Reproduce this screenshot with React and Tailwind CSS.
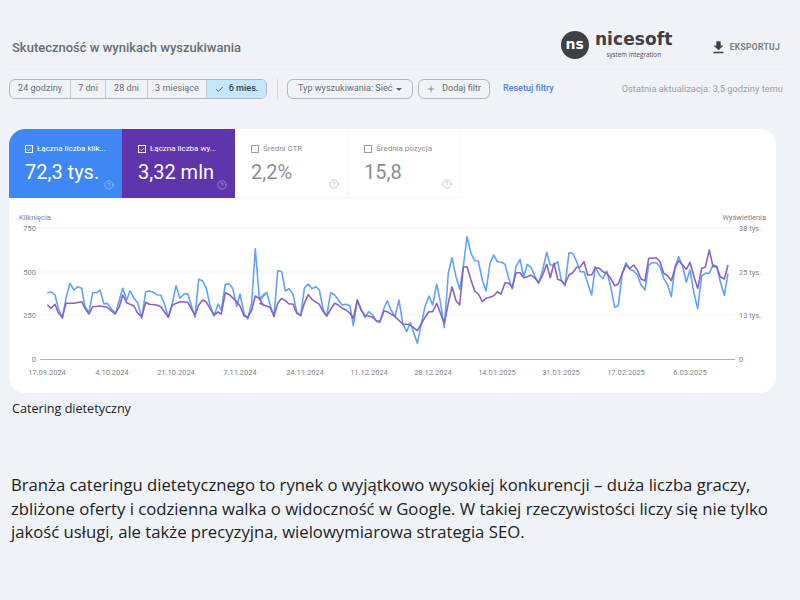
import React from 'react';
import { Check, Plus, CircleHelp } from 'lucide-react';

// points read off the reference chart, [x, y] in zoomed crop coords
const toPath = (groups) =>
  groups
    .flatMap(([base, pts]) => pts.map(([x, y]) => [base + x / 3, 210 + y / 3]))
    .map(([x, y], i) => `${i ? 'L' : 'M'}${x.toFixed(1)} ${y.toFixed(1)}`)
    .join(' ');

const blue = toPath([
  [0, [[142,248],[155,246],[165,255],[175,295],[187,325],[198,265],[210,220],[222,240],[233,230],[245,235],[255,290],[267,308],[278,248],[290,248],[300,240],[312,282],[322,280],[335,298],[347,310],[358,270],[368,235],[380,270],[390,242],[402,265],[413,278],[425,325],[437,245],[448,243],[460,247],[470,254],[482,255],[493,280],[505,322],[517,280],[528,227],[540,265],[552,252],[563,251],[575,290],[585,322],[596,208],[608,213],[618,232],[630,285],[642,318],[654,282],[664,300],[676,223],[688,222],[698,235],[710,290],[720,252],[732,310],[743,327],[755,280],[766,116],[778,265],[790,255],[800,248]]],
  [260, [[0,270],[10,255],[20,247],[32,290],[42,320],[53,182],[65,185],[76,243],[87,236],[99,252],[110,305],[122,318],[133,235],[145,222],[156,236],[168,230],[178,240],[190,300],[200,318],[212,248],[224,255],[235,270],[247,285],[258,283],[270,288],[280,347],[292,272],[315,322],[326,305],[338,315],[350,335],[360,337],[372,295],[382,272],[393,300],[405,320],[417,270],[428,340],[440,365],[451,338],[472,400],[495,290],[507,258],[518,285],[530,222],[541,275],[553,353],[565,190],[576,143],[588,200],[599,238],[610,170],[621,80],[633,130],[644,152],[655,153],[667,210],[678,243],[690,160],[701,135],[712,155],[723,156],[735,163],[746,205],[757,237],[768,170]]],
  [520, [[0,148],[11,200],[22,163],[33,172],[45,200],[56,220],[68,180],[80,127],[91,165],[102,165],[113,155],[124,210],[135,228],[147,128],[158,130],[170,155],[181,185],[192,185],[203,220],[215,255],[226,170],[238,195],[249,205],[260,183],[272,230],[284,292],[295,287],[307,190],[318,158],[329,178],[341,183],[352,195],[363,225],[375,240],[386,165],[397,158],[409,158],[420,170],[431,205],[443,225],[454,260],[465,170],[476,140],[488,170],[499,217],[510,180],[522,250],[533,296],[545,198],[556,190],[568,190],[579,165],[590,168],[601,215],[613,256],[624,190]]],
]);

const purple = toPath([
  [0, [[142,284],[153,295],[165,283],[175,308],[187,322],[198,280],[210,280],[222,280],[245,275],[255,295],[267,312],[278,290],[300,288],[322,292],[345,312],[358,290],[368,255],[380,278],[402,288],[413,310],[425,320],[437,277],[448,283],[470,285],[482,290],[505,322],[517,285],[540,275],[563,277],[585,315],[596,285],[608,270],[618,275],[642,315],[654,306],[664,312],[676,248],[688,254],[710,275],[720,288],[732,318],[743,322],[755,300],[766,258],[778,266],[790,285]]],
  [260, [[0,280],[10,285],[30,292],[42,318],[53,280],[65,265],[76,272],[87,282],[99,282],[110,310],[122,316],[133,280],[145,254],[156,268],[178,283],[190,305],[200,318],[212,298],[224,280],[235,285],[247,295],[258,300],[270,310],[280,325],[292,270],[303,300],[315,317],[326,318],[338,322],[350,333],[360,333],[372,303],[382,305],[405,320],[428,342],[440,343],[451,345],[472,362],[495,322],[507,305],[518,305],[530,280],[553,340],[565,280],[576,230],[588,272],[599,285],[610,172],[621,170],[633,210],[644,243],[655,252],[667,275],[678,265],[690,262],[701,257],[712,245],[723,252],[735,218],[746,220],[757,232],[768,188]]],
  [520, [[0,188],[11,203],[22,200],[33,195],[45,205],[56,218],[68,195],[80,163],[91,203],[102,160],[113,208],[124,212],[135,222],[147,195],[158,188],[170,172],[181,170],[192,155],[203,195],[215,195],[226,173],[238,175],[249,185],[260,190],[272,205],[284,227],[295,222],[307,190],[318,165],[329,175],[341,165],[352,180],[363,207],[375,212],[386,145],[397,145],[409,143],[420,155],[431,190],[443,197],[454,212],[465,175],[476,152],[488,165],[499,178],[510,157],[522,200],[533,235],[545,175],[556,172],[568,120],[579,170],[590,170],[601,200],[613,207],[624,165]]],
]);

const dates = [
  [47, '17.09.2024'], [112, '4.10.2024'], [176, '21.10.2024'], [240, '7.11.2024'],
  [305, '24.11.2024'], [369, '11.12.2024'], [433, '28.12.2024'], [497, '14.01.2025'],
  [561, '31.01.2025'], [626, '17.02.2025'], [690, '6.03.2025'],
];

const ranges = [
  { label: '24 godziny', w: 'w-[61px]' },
  { label: '7 dni', w: 'w-[35px]' },
  { label: '28 dni', w: 'w-[42px]' },
  { label: '3 miesiące', w: 'w-[59px]' },
];

const Metric = ({ label, value, checked, className, boxClass, helpClass }) => (
  <div className={`relative w-[113px] h-[69px] pl-[16px] pt-[15px] ${className}`}>
    <div className="flex items-center gap-[4px] text-[8px] leading-[10px]">
      <span className={`flex items-center justify-center w-[8px] h-[8px] border ${boxClass}`}>
        {checked && <Check size={7} strokeWidth={2.5} />}
      </span>
      {label}
    </div>
    <div className="mt-[6px] text-[20px] leading-[24px]">{value}</div>
    <CircleHelp size={10} strokeWidth={1.25} className={`absolute right-[8px] bottom-[8px] ${helpClass}`} />
  </div>
);

const App = () => {
  return (
    <div className="w-[800px] h-[600px] overflow-hidden bg-[#eff3f8] font-['Roboto',sans-serif]">
      <div className="flex items-center h-[70px] ml-[9px] mr-[12px] pl-[3px] pr-[8px] pt-[26px] border-b border-[#eaedf2]">
        <h1 className="text-[13px] font-medium text-[#696d71] whitespace-nowrap">Skuteczność w wynikach wyszukiwania</h1>
        <div className="ml-auto -mt-[6px] flex items-center gap-[4px]">
          <div className="w-[28px] h-[28px] rounded-full bg-[#3f4044] flex items-center justify-center text-white font-['DejaVu_Sans',sans-serif] text-[14px] font-bold leading-none pb-[2px]">ns</div>
          <div className="flex flex-col items-center w-[82px]">
            <span className="font-['DejaVu_Sans',sans-serif] text-[17px] leading-[17px] font-bold text-[#3f4044] tracking-[0.1px]">nicesoft</span>
            <span className="mt-[3px] font-['Open_Sans',sans-serif] text-[6.3px] leading-[7px] text-[#4a4b4f]">system integration</span>
          </div>
        </div>
        <div className="ml-[35px] flex items-center gap-[3px] text-[#7a7e83]">
          <svg viewBox="0 0 24 24" className="w-[17px] h-[17px] fill-[#3f4044]">
            <path d="M19 9h-4V3H9v6H5l7 7 7-7zM5 18v2h14v-2H5z" />
          </svg>
          <span className="text-[8.5px] font-bold tracking-[0.3px]">EKSPORTUJ</span>
        </div>
      </div>

      <div className="flex items-center h-[20px] mt-[9px] ml-[9px] whitespace-nowrap">
        <div className="flex h-[20px] w-[258px] rounded-[6px] border border-[#b4b8bd] overflow-hidden text-[9.1px] text-[#696d71]">
          {ranges.map((r) => (
            <div key={r.label} className={`${r.w} flex items-center justify-center border-r border-[#c4c7c9]`}>{r.label}</div>
          ))}
          <div className="flex-1 flex items-center justify-center gap-[5px] bg-[#c2e7ff] text-[#3c4043] font-medium">
            <Check size={9} strokeWidth={2} />
            6 mies.
          </div>
        </div>
        <div className="w-px h-[20px] bg-[#d5d8dc] ml-[10px]" />
        <div className="flex items-center justify-between w-[126px] h-[20px] ml-[9px] px-[10px] rounded-[6px] border border-[#b4b8bd] text-[9.1px] text-[#696d71]">
          Typ wyszukiwania: Sieć
          <span className="w-0 h-0 border-x-[3px] border-x-transparent border-t-[3px] border-t-[#5f6368]" />
        </div>
        <div className="flex items-center gap-[6px] w-[72px] h-[20px] ml-[5px] pl-[7px] rounded-[6px] border border-[#b4b8bd] text-[9.1px] text-[#696d71]">
          <Plus size={10} strokeWidth={1.75} />
          Dodaj filtr
        </div>
        <span className="ml-[13px] text-[9px] font-medium text-[#4a80ec]">Resetuj filtry</span>
        <span className="ml-[68px] text-[9.3px] text-[#9aa0a6]">Ostatnia aktualizacja: 3,5 godziny temu</span>
      </div>

      <div className="mt-[30px] ml-[9px] w-[767px] h-[264px] bg-white rounded-[16px] overflow-hidden">
        <div className="flex">
          <Metric label="Łączna liczba klik..." value="72,3 tys." checked className="bg-[#3f87f5] text-white" boxClass="border-white" helpClass="text-white/70" />
          <Metric label="Łączna liczba wy..." value="3,32 mln" checked className="bg-[#5e35ab] text-white" boxClass="border-white" helpClass="text-white/70" />
          <Metric label="Średni CTR" value="2,2%" className="border-r border-b border-[#f5f6f7] text-[#8a8f94]" boxClass="border-[#9aa0a6]" helpClass="text-[#9aa0a6]" />
          <Metric label="Średnia pozycja" value="15,8" className="border-r border-b border-[#f5f6f7] text-[#8a8f94]" boxClass="border-[#9aa0a6]" helpClass="text-[#9aa0a6]" />
        </div>
        <svg viewBox="9 198 767 195" className="block w-[767px] h-[195px]">
          <g fontFamily="Roboto, sans-serif" fontSize="7.5" fill="#80868b">
            <text x="19" y="220">Kliknięcia</text>
            <text x="766" y="220" textAnchor="end">Wyświetlenia</text>
            {[[228, '750'], [272, '500'], [315, '250'], [359.5, '0']].map(([y, t]) => (
              <text key={t} x="36" y={y + 2.5} textAnchor="end">{t}</text>
            ))}
            {[[228, '38 tys.'], [272, '25 tys.'], [315, '13 tys.'], [359.5, '0']].map(([y, t]) => (
              <text key={t} x="739" y={y + 2.5}>{t}</text>
            ))}
            {dates.map(([x, t]) => (
              <text key={t} x={x} y="375" textAnchor="middle">{t}</text>
            ))}
          </g>
          {[228, 272, 315].map((y) => (
            <line key={y} x1="40" x2="735" y1={y} y2={y} stroke="#f3f4f5" strokeWidth="1" />
          ))}
          <line x1="40" x2="735" y1="359.5" y2="359.5" stroke="#aeb1b5" strokeWidth="1" />
          <path d={blue} fill="none" stroke="#62a2fa" strokeWidth="1.6" strokeLinejoin="round" />
          <path d={purple} fill="none" stroke="#8a62c2" strokeWidth="1.6" strokeLinejoin="round" />
        </svg>
      </div>

      <div className="font-['Open_Sans',sans-serif] text-[#222]">
        <p className="mt-[7px] ml-[12px] text-[12.6px] leading-[17px]">Catering dietetyczny</p>
        <p className="mt-[56px] ml-[11px] w-[770px] text-[16.7px] leading-[23.5px]">
          Branża cateringu dietetycznego to rynek o wyjątkowo wysokiej konkurencji – duża liczba graczy, zbliżone oferty i codzienna walka o widoczność w Google. W takiej rzeczywistości liczy się nie tylko jakość usługi, ale także precyzyjna, wielowymiarowa strategia SEO.
        </p>
      </div>
    </div>
  );
};

export default App;
